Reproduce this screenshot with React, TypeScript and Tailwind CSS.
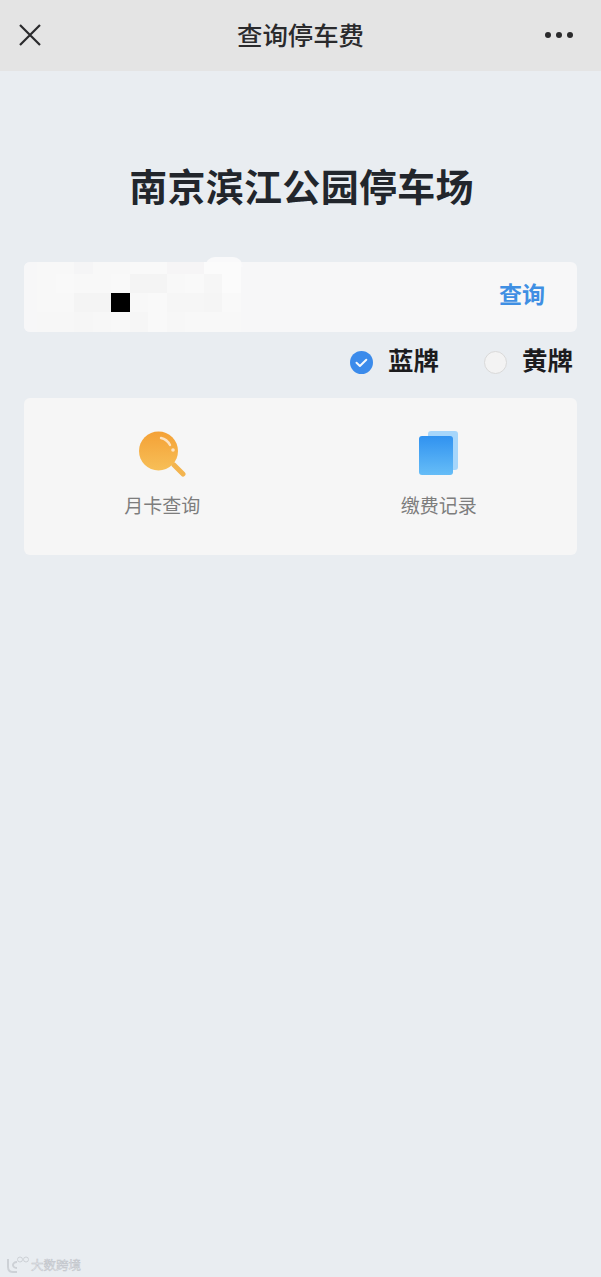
const cjk = "font-['Noto_Sans_CJK_SC','Liberation_Sans',sans-serif]";

// blurred plate number, one row of cells per line
const mosaic = [
  "#f7f7f8", "#f8f8f8", "#f8f8f8", "#f5f5f6", "#f8f8f8", "#f8f8f8", "#f9f9f9", "#f9f9f9", "#f6f5f6", "#f6f5f6", "#fbfbfb", "#fbfbfb",
  "#f7f7f8", "#f8f8f8", "#f9f9f9", "#f8f8f8", "#f8f8f8", "#f9f9f9", "#f4f4f4", "#f4f4f4", "#f8f8f8", "#f9f9f9", "#f6f6f6", "#fbfbfb",
  "#f7f7f8", "#f8f8f8", "#f8f8f8", "#f4f4f4", "#f4f4f4", "#000000", "#f8f8f8", "#f9f9f9", "#f6f6f6", "#f6f6f6", "#f5f5f5", "#f9f9f9",
  "#f7f7f8", "#f7f7f7", "#f7f7f7", "#f6f6f6", "#f7f7f7", "#f8f8f8", "#f6f6f6", "#f9f9f9", "#f7f7f7", "#f8f8f8", "#f8f8f8", "#f8f8f8",
];

function PlateRadio({ label, checked }: { label: string; checked?: boolean }) {
  return (
    <div className="flex items-center gap-[15px]">
      {checked ? (
        <svg width="23" height="23" viewBox="0 0 23 23">
          <circle cx="11.5" cy="11.5" r="11.5" fill="#3b8beb" />
          <path d="M6.5 11.8l3.4 3.2 6.4-6.2" fill="none" stroke="#f4f8fd" strokeWidth="2" strokeLinecap="round" strokeLinejoin="round" />
        </svg>
      ) : (
        <div className="h-[23px] w-[23px] rounded-full border border-[#d9d9d9] bg-[#f3f3f3]" />
      )}
      <span className="pb-[6px] text-[25.5px] leading-[28px] font-bold text-[#1c1c1e]">{label}</span>
    </div>
  );
}

export default function App() {
  return (
    <div className={`relative flex h-[1277px] w-[601px] flex-col overflow-hidden bg-[#e9edf1] ${cjk}`}>
      <header className="grid h-[71px] grid-cols-[1fr_auto_1fr] items-center bg-[#e4e4e4] pr-[28px] pl-[18px]">
        <svg width="24" height="24" viewBox="0 0 24 24" fill="none" stroke="#2a2a2c" strokeWidth="2.2" className="mb-[2px]">
          <path d="M2 2l20 20M22 2L2 22" />
        </svg>
        <h1 className="pb-[4px] pl-[10px] text-[25.4px] leading-[36px] font-medium text-[#2a2a2c]">查询停车费</h1>
        <div className="mb-[2px] flex justify-end gap-[5px]">
          <span className="h-[6px] w-[6px] rounded-full bg-[#2a2a2c]" />
          <span className="h-[6px] w-[6px] rounded-full bg-[#2a2a2c]" />
          <span className="h-[6px] w-[6px] rounded-full bg-[#2a2a2c]" />
        </div>
      </header>

      <main className="flex flex-col px-[24px]">
        <h2 className="mt-[86px] pl-[2px] text-center text-[38px] leading-[56px] font-bold tracking-[0.3px] text-[#22262c]">南京滨江公园停车场</h2>

        <div className="relative mt-[49px] flex h-[70px] items-center justify-between rounded-[6px] bg-[#f7f7f8] pr-[32px]">
          <div className="absolute top-[-5px] left-[181px] h-[10px] w-[38px] rounded-t-[10px] bg-[#f9f9fa]" />
          <div className="relative grid h-[70px] grid-cols-[13px_repeat(11,18.5px)] grid-rows-[12px_19px_19px_20px] overflow-hidden rounded-l-[6px]">
            {mosaic.map((c, i) => (
              <div key={i} style={{ backgroundColor: c }} />
            ))}
          </div>
          <span className="pb-[8px] text-[23px] leading-[32px] font-bold text-[#3f8fe3]">查询</span>
        </div>

        <div className="mt-[13px] flex h-[34px] items-center justify-end gap-[45px] pr-[4px]">
          <PlateRadio label="蓝牌" checked />
          <PlateRadio label="黄牌" />
        </div>

        <div className="mt-[19px] grid h-[157px] grid-cols-2 rounded-[6px] bg-[#f6f6f6]">
          <div className="flex flex-col items-center pt-[32px]">
            <svg width="48" height="48" viewBox="0 0 48 48">
              <defs>
                <linearGradient id="lens" x1="0" y1="0" x2="0" y2="1">
                  <stop offset="0" stopColor="#f4a136" />
                  <stop offset="1" stopColor="#f7bf58" />
                </linearGradient>
              </defs>
              <path d="M36 35l9 9" stroke="#f3b44f" strokeWidth="5" strokeLinecap="round" />
              <circle cx="20.5" cy="21" r="19.5" fill="url(#lens)" />
              <path d="M23 8c4 .8 7 3.2 9 7" fill="none" stroke="#fde3c2" strokeWidth="2.4" strokeLinecap="round" />
              <circle cx="35" cy="20" r="1.8" fill="#fde3c2" />
            </svg>
            <span className="mt-[13px] text-[19px] leading-[28px] text-[#7d7d7d]">月卡查询</span>
          </div>
          <div className="flex flex-col items-center pt-[32px]">
            <svg width="48" height="48" viewBox="0 0 48 48">
              <defs>
                <linearGradient id="page" x1="0" y1="0" x2="0" y2="1">
                  <stop offset="0" stopColor="#3092f0" />
                  <stop offset="1" stopColor="#66bdf7" />
                </linearGradient>
              </defs>
              <rect x="13" y="1" width="30" height="39" rx="3" fill="#a6d6fb" />
              <rect x="4" y="6" width="34" height="39" rx="3" fill="url(#page)" />
            </svg>
            <span className="mt-[13px] text-[19px] leading-[28px] text-[#7d7d7d]">缴费记录</span>
          </div>
        </div>
      </main>

      <div className="absolute bottom-[3px] left-[6px] flex items-center gap-[1px] text-[#cdd1d6]">
        <svg width="24" height="18" viewBox="0 0 24 18" fill="none" stroke="currentColor">
          <path d="M2 3v8c0 3 2 5 5 5h4" strokeWidth="2" />
          <path d="M11 6c-3 0-4 2-4 3s1 3 4 3" strokeWidth="2" />
          <circle cx="14" cy="3.5" r="2.5" strokeWidth="1" />
          <circle cx="20" cy="3.5" r="2.5" strokeWidth="1" />
        </svg>
        <span className="text-[12.5px] leading-[16px] text-[#eef0f3] [-webkit-text-stroke:0.5px_#bfc3c9]">大数跨境</span>
      </div>
    </div>
  );
}
